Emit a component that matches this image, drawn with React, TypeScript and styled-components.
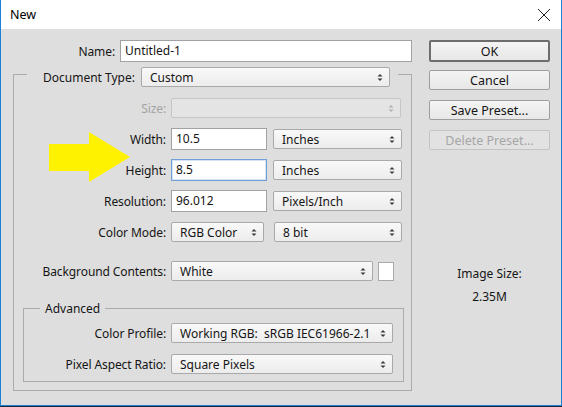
import React from "react";
import styled, { createGlobalStyle } from "styled-components";

const GlobalStyle = createGlobalStyle`
  html, body {
    margin: 0;
    padding: 0;
    background: #1d2b38;
  }
  body {
    font-family: "Noto Sans", "Liberation Sans", sans-serif;
    font-size: 12px;
    color: #151515;
  }
`;

const Window = styled.div`
  position: relative;
  width: 562px;
  height: 406px;
  box-sizing: border-box;
  border: 1px solid #1a82d6;
  border-top: none;
  background: #dedede;
  display: flex;
  flex-direction: column;
`;

const TitleBar = styled.div`
  height: 29px;
  background: #ffffff;
  display: flex;
  align-items: center;
  justify-content: space-between;
  padding: 0 10px 0 9px;
  font-size: 12.5px;
  color: #000;
`;

const Body = styled.div`
  display: flex;
  padding: 11px 0 0 12px;
`;

const LeftColumn = styled.div`
  width: 399px;
  display: flex;
  flex-direction: column;
`;

const RightColumn = styled.div`
  width: 121px;
  margin-left: 17px;
  display: flex;
  flex-direction: column;
  align-items: center;
`;

const NameRow = styled.div`
  display: grid;
  grid-template-columns: 102px 292px;
  column-gap: 5px;
  align-items: center;
  height: 22px;
`;

const Label = styled.span<{ $disabled?: boolean }>`
  text-align: right;
  white-space: nowrap;
  letter-spacing: -0.1px;
  color: ${(p) => (p.$disabled ? "#a3a3a3" : "#151515")};
`;

const TextInput = styled.div<{ $width?: number; $focused?: boolean }>`
  box-sizing: border-box;
  height: 22px;
  width: ${(p) => (p.$width ? `${p.$width}px` : "100%")};
  background: #fff;
  border: 1px solid ${(p) => (p.$focused ? "#6e9fd6" : "#a2a2a2")};
  box-shadow: ${(p) => (p.$focused ? "inset 0 0 0 1px #d5e4f5" : "none")};
  padding: 0 4px;
  display: flex;
  align-items: center;
  line-height: 1;
`;

const Group = styled.div<{ $margin?: string }>`
  display: flex;
  flex-direction: column;
  margin: ${(p) => p.$margin || "0"};
`;

const GroupHead = styled.div<{ $height: number }>`
  display: flex;
  align-items: center;
  height: ${(p) => p.$height}px;
`;

const Segment = styled.div<{ $width?: number; $offset?: number }>`
  align-self: flex-start;
  margin-top: ${(p) => p.$offset || 0}px;
  border-top: 1px solid #ababab;
  ${(p) => (p.$width ? `width: ${p.$width}px;` : "flex: 1;")}
`;

const Frame = styled.div<{ $pull: number; $padTop: number; $padBottom: number }>`
  margin-top: -${(p) => p.$pull}px;
  padding: ${(p) => p.$padTop}px 0 ${(p) => p.$padBottom}px;
  border: 1px solid #ababab;
  border-top: none;
  display: flex;
  flex-direction: column;
`;

const HeadLabel = styled.span<{ $width?: number }>`
  white-space: nowrap;
  padding: 0 0 0 16px;
  ${(p) => (p.$width ? `width: ${p.$width}px; box-sizing: border-box;` : "")}
`;

const GroupTitle = styled.span`
  white-space: nowrap;
  padding: 0 5px;
  align-self: center;
`;

const Row = styled.div<{ $labelWidth: number; $gapTop?: number }>`
  display: grid;
  grid-template-columns: ${(p) => p.$labelWidth}px 1fr;
  column-gap: 5px;
  align-items: center;
  height: 22px;
  margin-top: ${(p) => p.$gapTop ?? 9}px;
`;

const Fields = styled.div<{ $gap?: number }>`
  display: flex;
  align-items: center;
  gap: ${(p) => p.$gap ?? 6}px;
`;

const SelectBox = styled.div<{ $width: number; $disabled?: boolean }>`
  position: relative;
  box-sizing: border-box;
  width: ${(p) => p.$width}px;
  height: 20px;
  border: 1px solid ${(p) => (p.$disabled ? "#c6c6c6" : "#a9a9a9")};
  border-radius: 2px;
  background: ${(p) =>
    p.$disabled ? "#e4e4e4" : "linear-gradient(#f9f9f9, #ececec)"};
  display: flex;
  align-items: center;
  justify-content: space-between;
  padding: 0 6px 0 8px;
  color: #151515;
  white-space: nowrap;
  overflow: hidden;
  flex-shrink: 0;
`;

const Swatch = styled.div`
  width: 16px;
  height: 19px;
  box-sizing: border-box;
  background: #fff;
  border: 1px solid #a9a9a9;
`;

const ButtonStack = styled.div`
  display: grid;
  grid-auto-rows: 30px;
  align-items: start;
  width: 121px;
`;

const Button = styled.div<{ $primary?: boolean; $disabled?: boolean }>`
  box-sizing: border-box;
  height: ${(p) => (p.$primary ? 22 : 20)}px;
  border: ${(p) =>
    p.$primary
      ? "2px solid #6d6d6d"
      : `1px solid ${p.$disabled ? "#c4c4c4" : "#9e9e9e"}`};
  border-radius: 2px;
  background: ${(p) =>
    p.$disabled ? "#e2e2e2" : "linear-gradient(#f4f4f4, #e7e7e7)"};
  color: ${(p) => (p.$disabled ? "#a6a6a6" : "#151515")};
  display: flex;
  align-items: center;
  justify-content: center;
  font-size: 12.5px;
`;

const SizeInfo = styled.div`
  margin-top: 106px;
  display: flex;
  flex-direction: column;
  align-items: center;
  gap: 7px;
  line-height: 16px;
`;

const Arrow = styled.svg`
  position: absolute;
  left: 0;
  top: 0;
  pointer-events: none;
`;

function Spinner({ disabled }: { disabled?: boolean }) {
  const c = disabled ? "#b0b0b0" : "#3a3a3a";
  return (
    <svg width="6" height="9" viewBox="0 0 6 9">
      <path d="M0.5 3.5 L3 1 L5.5 3.5 Z" fill={c} />
      <path d="M0.5 5.5 L3 8 L5.5 5.5 Z" fill={c} />
    </svg>
  );
}

function Select({
  width,
  value,
  disabled,
}: {
  width: number;
  value?: string;
  disabled?: boolean;
}) {
  return (
    <SelectBox $width={width} $disabled={disabled}>
      <span>{value}</span>
      <Spinner disabled={disabled} />
    </SelectBox>
  );
}

function CloseIcon() {
  return (
    <svg width="14" height="14" viewBox="0 0 14 14">
      <path d="M1 1 L13 13 M13 1 L1 13" stroke="#222" strokeWidth="1" />
    </svg>
  );
}

export default function App() {
  return (
    <>
      <GlobalStyle />
      <Window>
        <TitleBar>
          <span>New</span>
          <CloseIcon />
        </TitleBar>
        <Body>
          <LeftColumn>
            <NameRow>
              <Label>Name:</Label>
              <TextInput>Untitled-1</TextInput>
            </NameRow>

            <Group $margin="5px 0 0 0">
              <GroupHead $height={20}>
                <Segment $width={14} $offset={7} />
                <HeadLabel $width={114}>Document Type:</HeadLabel>
                <Select width={249} value="Custom" />
                <Segment $offset={7} style={{ marginLeft: 8 }} />
              </GroupHead>
              <Frame $pull={13} $padTop={23} $padBottom={8}>
                <Row $labelWidth={152} $gapTop={0}>
                  <Label $disabled>Size:</Label>
                  <Fields>
                    <Select width={230} disabled />
                  </Fields>
                </Row>
                <Row $labelWidth={152}>
                  <Label>Width:</Label>
                  <Fields>
                    <TextInput $width={96}>10.5</TextInput>
                    <Select width={129} value="Inches" />
                  </Fields>
                </Row>
                <Row $labelWidth={152}>
                  <Label>Height:</Label>
                  <Fields>
                    <TextInput $width={96} $focused>
                      8.5
                    </TextInput>
                    <Select width={129} value="Inches" />
                  </Fields>
                </Row>
                <Row $labelWidth={152}>
                  <Label>Resolution:</Label>
                  <Fields>
                    <TextInput $width={96}>96.012</TextInput>
                    <Select width={129} value="Pixels/Inch" />
                  </Fields>
                </Row>
                <Row $labelWidth={152}>
                  <Label>Color Mode:</Label>
                  <Fields $gap={10}>
                    <Select width={93} value="RGB Color" />
                    <Select width={128} value="8 bit" />
                  </Fields>
                </Row>
                <Row $labelWidth={152} $gapTop={17}>
                  <Label>Background Contents:</Label>
                  <Fields $gap={5}>
                    <Select width={202} value="White" />
                    <Swatch />
                  </Fields>
                </Row>

                <Group $margin="18px 7px 0 9px">
                  <GroupHead $height={16}>
                    <Segment $width={17} $offset={8} />
                    <GroupTitle>Advanced</GroupTitle>
                    <Segment $offset={8} />
                  </GroupHead>
                  <Frame $pull={8} $padTop={14} $padBottom={6}>
                    <Row $labelWidth={142} $gapTop={0}>
                      <Label>Color Profile:</Label>
                      <Fields>
                        <Select
                          width={222}
                          value={"Working RGB:\u00a0 sRGB IEC61966-2.1"}
                        />
                      </Fields>
                    </Row>
                    <Row $labelWidth={142}>
                      <Label>Pixel Aspect Ratio:</Label>
                      <Fields>
                        <Select width={222} value="Square Pixels" />
                      </Fields>
                    </Row>
                  </Frame>
                </Group>
              </Frame>
            </Group>
          </LeftColumn>

          <RightColumn>
            <ButtonStack>
              <Button $primary>OK</Button>
              <Button>Cancel</Button>
              <Button>Save Preset...</Button>
              <Button $disabled>Delete Preset...</Button>
            </ButtonStack>
            <SizeInfo>
              <span>Image Size:</span>
              <span>2.35M</span>
            </SizeInfo>
          </RightColumn>
        </Body>

        <Arrow width="562" height="406" viewBox="0 0 562 406">
          <polygon
            points="48,144 88,144 88,132 129,157 88,182 88,171 48,171"
            fill="#fff200"
          />
        </Arrow>
      </Window>
    </>
  );
}
